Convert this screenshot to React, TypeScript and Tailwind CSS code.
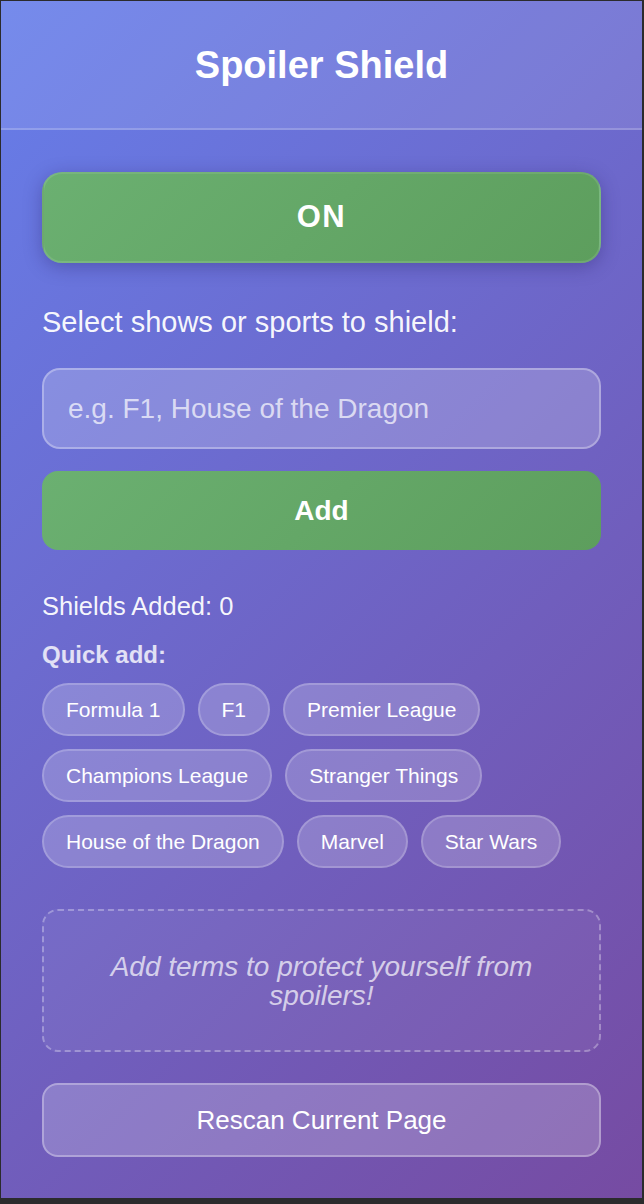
const quickAdd = [
  "Formula 1",
  "F1",
  "Premier League",
  "Champions League",
  "Stranger Things",
  "House of the Dragon",
  "Marvel",
  "Star Wars",
];

const App = () => {
  return (
    <div className="bg-[#2b2b2d] pt-px pl-px pr-[2px] pb-[6px] font-['Liberation_Sans',Arial,sans-serif]">
      <div className="bg-[linear-gradient(135deg,#667eea_0%,#764ba2_100%)] text-white">
        <div className="h-[129px] flex items-center justify-center bg-white/10 border-b-2 border-white/20">
          <h1 className="text-[38px] font-bold leading-none">Spoiler Shield</h1>
        </div>
        <div className="flex flex-col px-[41px] pt-[42px] pb-[41px]">
          <button className="h-[91px] w-full rounded-[20px] border-2 border-white/10 bg-[linear-gradient(135deg,#6bb071,#5d9e5d)] text-[31px] font-bold tracking-[1.5px] shadow-[0_4px_18px_rgba(40,30,100,0.35)]">
            ON
          </button>
          <label className="mt-[43px] text-[29px] leading-[32px] text-white/95">
            Select shows or sports to shield:
          </label>
          <input
            className="mt-[30px] h-[81px] w-full rounded-[18px] border-2 border-white/30 bg-white/20 px-[24px] text-[28px] text-white outline-none placeholder:text-white/70"
            placeholder="e.g. F1, House of the Dragon"
          />
          <button className="mt-[22px] h-[79px] w-full rounded-[16px] bg-[linear-gradient(135deg,#6bb071,#5d9e5d)] text-[28px] font-bold">
            Add
          </button>
          <div className="mt-[42px] text-[25.5px] leading-[29px] text-white/95">
            Shields Added: 0
          </div>
          <div className="mt-[19px] text-[24px] leading-[29px] font-semibold text-white/80">
            Quick add:
          </div>
          <div className="mt-[14px] flex flex-wrap gap-[13px]">
            {quickAdd.map((t) => (
              <button
                key={t}
                className="h-[53px] rounded-full border-2 border-white/20 bg-white/20 px-[22px] text-[21px] text-white"
              >
                {t}
              </button>
            ))}
          </div>
          <div className="mt-[41px] h-[143px] flex items-center justify-center rounded-[16px] border-2 border-dashed border-white/30 bg-white/5 px-[35px] text-center text-[28px] italic leading-[29px] text-white/70">
            Add terms to protect yourself from spoilers!
          </div>
          <button className="mt-[31px] h-[74px] w-full rounded-[16px] border-2 border-white/30 bg-white/20 text-[26px] text-white">
            Rescan Current Page
          </button>
        </div>
      </div>
    </div>
  );
};

export default App;
